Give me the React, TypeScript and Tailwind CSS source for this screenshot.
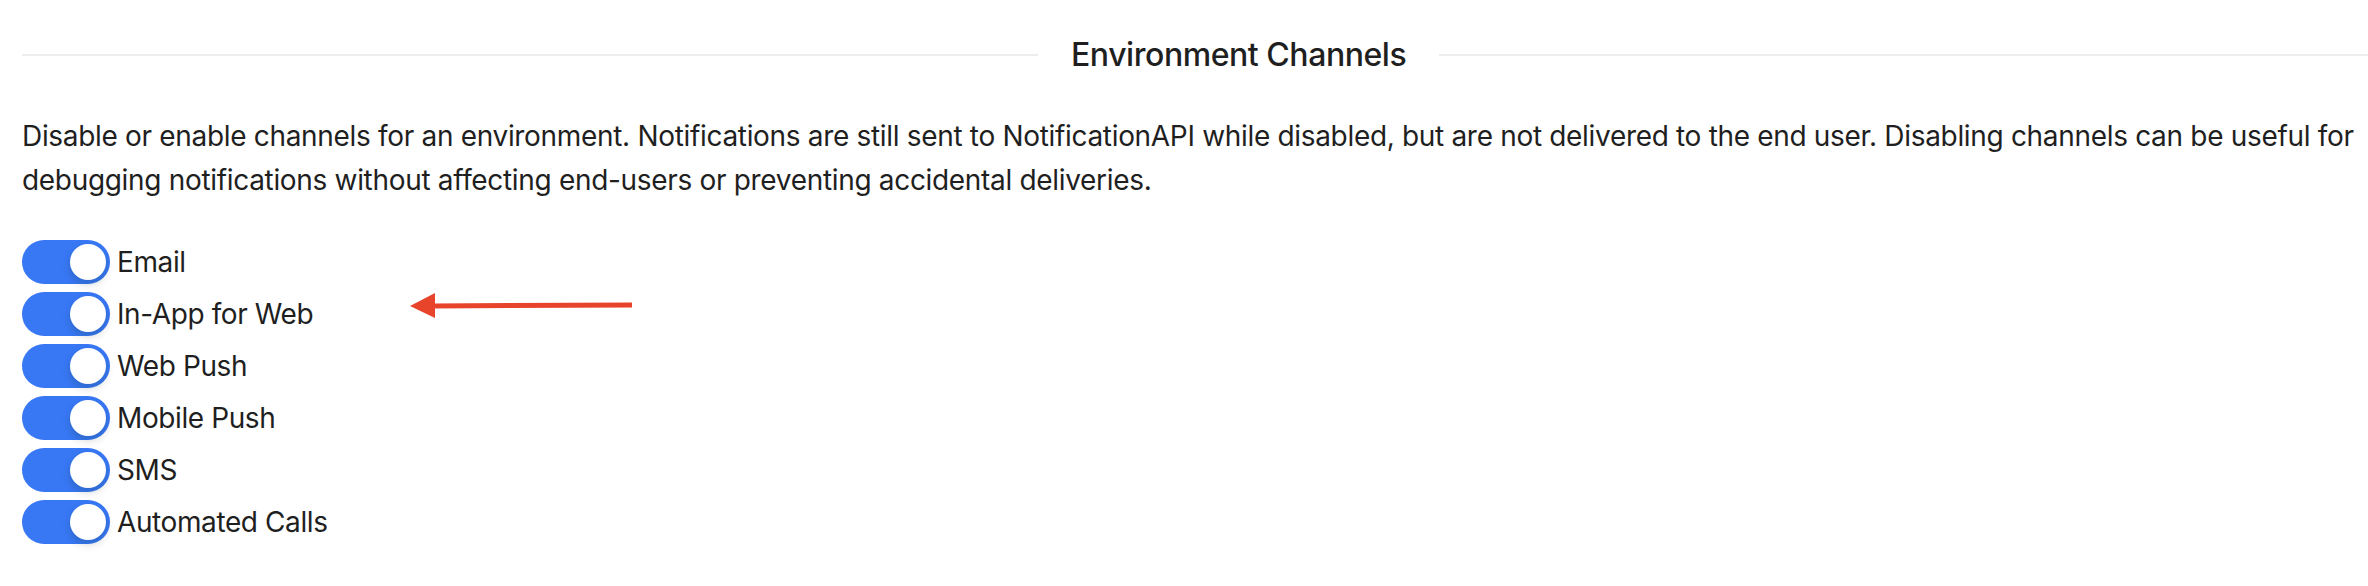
const channels = [
  "Email",
  "In-App for Web",
  "Web Push",
  "Mobile Push",
  "SMS",
  "Automated Calls",
];

// Switch in the "on" state
const Toggle = () => (
  <span className="relative inline-flex h-[44px] w-[88px] shrink-0 items-center rounded-full bg-[#3878f5]">
    <span className="absolute right-[4px] top-[4px] h-[36px] w-[36px] rounded-full bg-white shadow-[0_4px_8px_0_rgba(0,35,11,0.2)]" />
  </span>
);

// Divider with the title in the middle
const SectionDivider = ({ title }: { title: string }) => (
  <div className="flex h-[50px] items-center">
    <div className="h-[2px] w-[1016px] bg-[#eeeeee]" />
    <span className="px-[33px] text-[32px] font-medium leading-[50px] tracking-[-0.45px] text-[#1f1f1f]">
      {title}
    </span>
    <div className="h-[2px] flex-1 bg-[#eeeeee]" />
  </div>
);

// Red annotation arrow drawn over the list
const Arrow = () => (
  <svg
    className="absolute left-[408px] top-[290px]"
    width="228"
    height="32"
    viewBox="0 0 228 32"
  >
    <line x1="24" y1="16" x2="224" y2="15" stroke="#e8432b" strokeWidth="5" />
    <polygon points="2,16 27,3 27,28" fill="#e8432b" />
  </svg>
);

export default function App() {
  return (
    <div className="relative min-h-[586px] bg-white pl-[22px] pt-[30px] font-['Inter',sans-serif] text-[#1f1f1f]">
      <SectionDivider title="Environment Channels" />
      <p className="mt-[34px] pr-[6px] text-[28px] leading-[44px] tracking-[-0.32px]">
        Disable or enable channels for an environment. Notifications are still
        sent to NotificationAPI while disabled, but are not delivered to the end
        user. Disabling channels can be useful for debugging notifications
        without affecting end-users or preventing accidental deliveries.
      </p>
      <div className="mt-[38px] flex flex-col gap-[8px]">
        {channels.map((c) => (
          <div key={c} className="flex h-[44px] items-center">
            <Toggle />
            <span className="ml-[7px] text-[28px] leading-[44px] tracking-[-0.4px]">
              {c}
            </span>
          </div>
        ))}
      </div>
      <Arrow />
    </div>
  );
}
